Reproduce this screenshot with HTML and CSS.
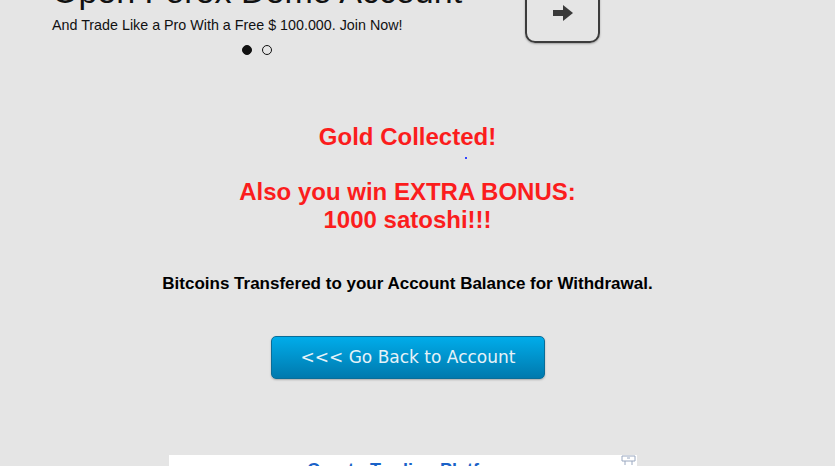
FILE: index.html
```html
<!DOCTYPE html>
<html lang="en">
<head>
    <meta charset="UTF-8">
    <meta name="viewport" content="width=device-width, initial-scale=1.0">
    <title>Gold Collected</title>
    <link rel="stylesheet" href="styles.css">
</head>
<body>
    <div class="promo">
        <div class="promo-text">
            <h1>Open Forex Demo Account</h1>
            <p>And Trade Like a Pro With a Free $ 100.000. Join Now!</p>
            <div class="dots">
                <span class="dot active"></span>
                <span class="dot"></span>
            </div>
        </div>
        <a class="promo-next" href="#">
            <svg width="20" height="16" viewBox="0 0 20 16"><path d="M0 5h10V0l10 8-10 8v-5H0z" fill="#3a3a3a"/></svg>
        </a>
    </div>

    <div class="result">
        <h2>Gold Collected!</h2>
        <div class="pixel"></div>
        <h2>Also you win EXTRA BONUS:<br>1000 satoshi!!!</h2>
        <p class="note">Bitcoins Transfered to your Account Balance for Withdrawal.</p>
        <a class="back" href="#">&lt;&lt;&lt; Go Back to Account</a>
    </div>

    <div class="ad">
        <span class="ad-text">Crypto Trading Platform</span>
        <svg class="ad-icon" width="15" height="11" viewBox="0 0 15 11"><path d="M1 1h13v5H1zM4 6v4M11 6v4M6 3h3" fill="none" stroke="#9aa8c0"/></svg>
    </div>
</body>
</html>
```
FILE: styles.css
```css
body {
    margin: 0;
    font-family: "Liberation Sans", Arial, sans-serif;
    background-color: #e5e5e5;
    color: #111;
    overflow: hidden;
}
.promo {
    display: flex;
    align-items: flex-start;
    padding-left: 52px;
}
.promo-text {
    width: 473px;
}
.promo h1 {
    margin: -26px 0 0;
    font-size: 34px;
    font-weight: normal;
    line-height: 34px;
    white-space: nowrap;
}
.promo p {
    margin: 9px 0 0;
    font-size: 14.3px;
    line-height: 16px;
}
.dots {
    display: flex;
    gap: 10px;
    margin: 12px 0 0 190px;
}
.dot {
    width: 8px;
    height: 8px;
    border: 1px solid #111;
    border-radius: 50%;
}
.dot.active { background-color: #111; }
.promo-next {
    display: flex;
    align-items: center;
    justify-content: center;
    width: 75px;
    height: 60px;
    margin-top: -17px;
    box-sizing: border-box;
    border: 2px solid #3c3c3c;
    border-radius: 10px;
    box-shadow: 0 1px 2px rgba(0,0,0,0.3);
}
.result {
    width: 815px;
    text-align: center;
}
.result h2 {
    margin: 0;
    font-size: 24px;
    line-height: 28px;
    color: #fb1d1d;
}
.result h2:first-child { margin-top: 68px; }
.pixel {
    width: 2px;
    height: 2px;
    margin: 6px 0 19px 465px;
    background-color: #3344ff;
}
.note {
    margin: 40px 0 0;
    font-size: 17px;
    font-weight: bold;
    line-height: 20px;
    color: #000;
}
.back {
    display: block;
    width: 271px;
    height: 41px;
    margin: 42px auto 0;
    padding-left: 1px;
    border: 1px solid #0a6d98;
    border-radius: 5px;
    background: linear-gradient(#00acea, #0079ad);
    box-shadow: 0 1px 2px rgba(0,0,0,0.25);
    color: #e6f2f8;
    font-family: "Comic Sans MS", "DejaVu Sans", sans-serif;
    font-size: 17px;
    line-height: 41px;
    text-decoration: none;
}
.ad {
    position: relative;
    height: 11px;
    width: 468px;
    margin: 76px 0 0 169px;
    background-color: #fff;
    text-align: center;
    overflow: hidden;
}
.ad-text {
    display: inline-block;
    margin: 6px 0 0 14px;
    font-size: 18px;
    line-height: 18px;
    font-weight: bold;
    color: #1a62c8;
}
.ad-icon {
    position: absolute;
    top: 0;
    right: 1px;
}
```
